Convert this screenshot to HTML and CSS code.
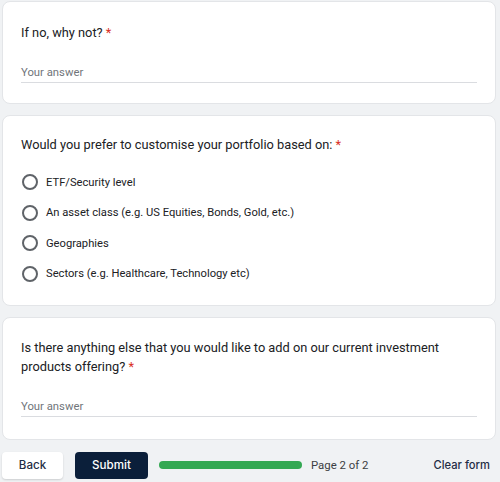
FILE: index.html
```html
<!DOCTYPE html>
<html>
<head>
<meta charset="utf-8">
<link rel="stylesheet" href="styles.css">
</head>
<body>
<div class="page">
  <section class="card card-first">
    <div class="question">If no, why not? <span class="req">*</span></div>
    <div class="answer">Your answer</div>
  </section>

  <section class="card card-radio">
    <div class="question">Would you prefer to customise your portfolio based on: <span class="req">*</span></div>
    <div class="options">
      <label class="option"><span class="radio"></span><span>ETF/Security level</span></label>
      <label class="option"><span class="radio"></span><span>An asset class (e.g. US Equities, Bonds, Gold, etc.)</span></label>
      <label class="option"><span class="radio"></span><span>Geographies</span></label>
      <label class="option"><span class="radio"></span><span>Sectors (e.g. Healthcare, Technology etc)</span></label>
    </div>
  </section>

  <section class="card card-last">
    <div class="question">Is there anything else that you would like to add on our current investment products offering? <span class="req">*</span></div>
    <div class="answer">Your answer</div>
  </section>

  <footer class="footer">
    <button class="btn btn-back">Back</button>
    <button class="btn btn-submit">Submit</button>
    <div class="progress"><div class="progress-fill"></div></div>
    <span class="page-count">Page 2 of 2</span>
    <span class="clear">Clear form</span>
  </footer>
</div>
</body>
</html>
```
FILE: styles.css
```css
html, body {
  margin: 0;
  padding: 0;
  background: #f0f2f4;
}
body {
  font-family: Roboto, "Liberation Sans", sans-serif;
  color: #202124;
  width: 500px;
  height: 482px;
  overflow: hidden;
}
.page {
  padding: 1px 4px 0 2px;
  display: flex;
  flex-direction: column;
  gap: 11px;
}
.card {
  background: #fff;
  border: 1px solid #e3e5e8;
  border-radius: 8px;
  padding: 21px 18px 20px 18px;
}
.question {
  font-family: Roboto, "Liberation Sans", sans-serif;
  font-size: 12.8px;
  line-height: 19px;
  color: #202124;
}
.req {
  color: #d93025;
}
.answer {
  margin-top: 21px;
  font-size: 11.3px;
  line-height: 19px;
  color: #70757a;
  border-bottom: 1px solid #dadce0;
}
.card-radio {
  padding-top: 19px;
  padding-bottom: 16px;
}
.options {
  margin-top: 13px;
  display: flex;
  flex-direction: column;
}
.option {
  display: flex;
  align-items: center;
  height: 30.5px;
  font-size: 11.2px;
  color: #202124;
}
.radio {
  width: 12px;
  height: 12px;
  border: 2px solid #5f6368;
  border-radius: 50%;
  margin-left: 1px;
  margin-right: 8px;
  flex: none;
}
.card-last {
  padding-top: 20px;
  padding-bottom: 22px;
}
.card-last .answer {
  margin-top: 21px;
}
.footer {
  display: flex;
  align-items: center;
  height: 28px;
}
.btn {
  font-family: Inter, Roboto, sans-serif;
  font-size: 11.6px;
  font-weight: 500;
  height: 27px;
  border-radius: 4px;
  border: none;
  padding: 0;
}
.btn-back {
  width: 61px;
  background: #fff;
  color: #1f2d45;
  box-shadow: 0 1px 2px rgba(0,0,0,0.15);
}
.btn-submit {
  width: 73px;
  margin-left: 12px;
  background: #0b1f3a;
  color: #fff;
}
.progress {
  margin-left: 11px;
  width: 143px;
  height: 8px;
  border-radius: 4px;
  background: #34a853;
}
.progress-fill {
  width: 100%;
  height: 100%;
}
.page-count {
  margin-left: 9px;
  font-size: 11.4px;
  color: #3c4043;
}
.clear {
  margin-left: auto;
  margin-right: 6px;
  font-family: Inter, Roboto, sans-serif;
  font-size: 11.2px;
  font-weight: 500;
  color: #1f2d45;
}
```
